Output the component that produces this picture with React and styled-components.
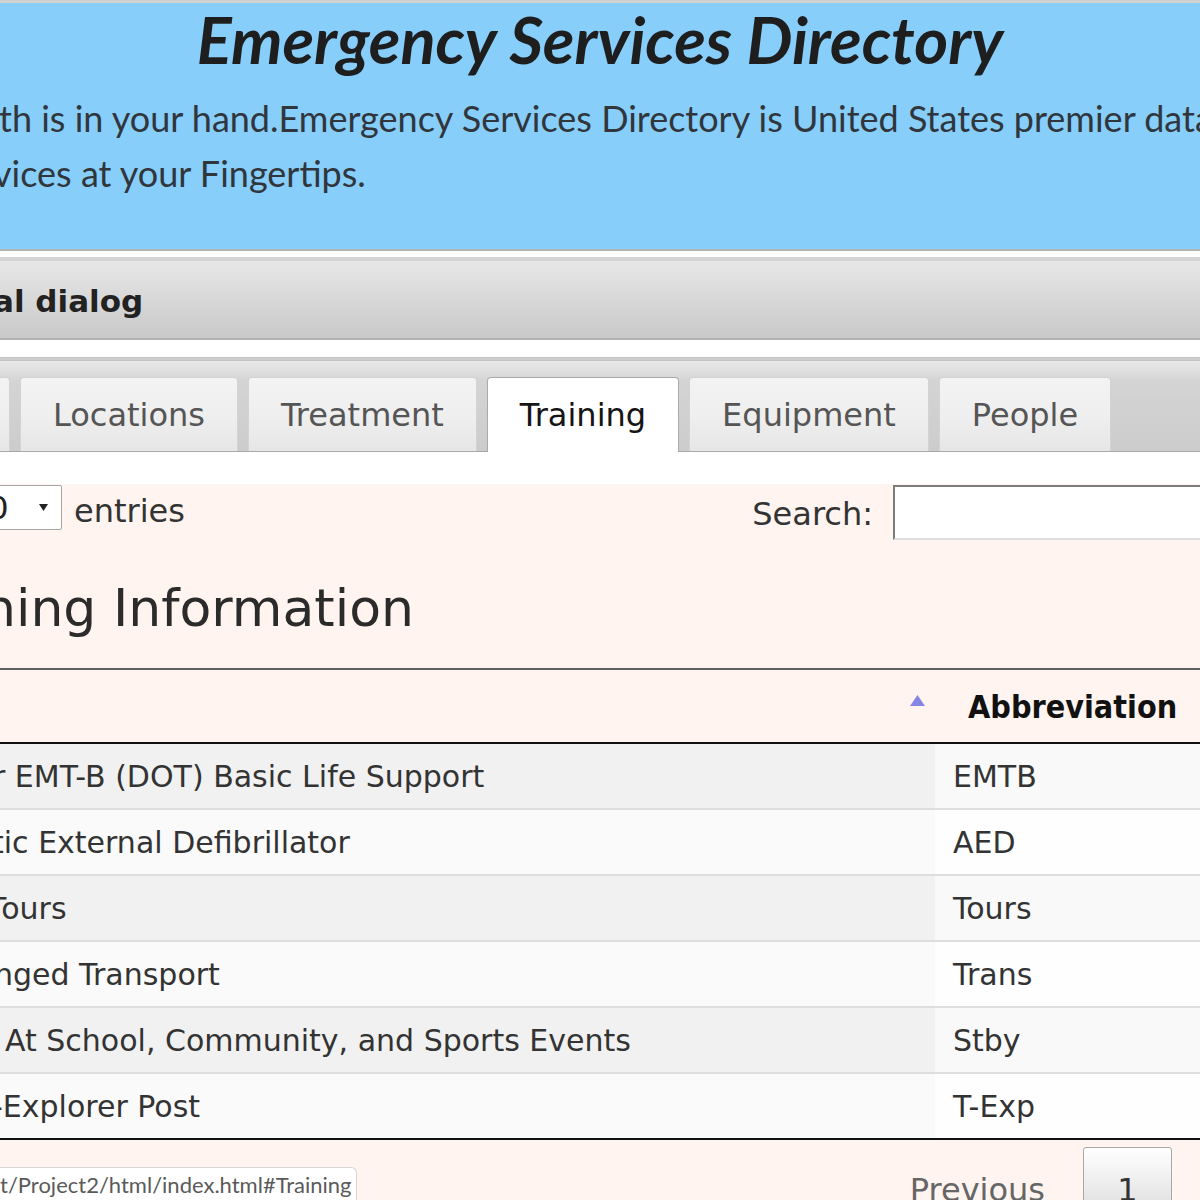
import styled, { createGlobalStyle } from "styled-components";

const GlobalStyle = createGlobalStyle`
	html, body {
		margin: 0;
		padding: 0;
		background: #ffffff;
		overflow: hidden;
	}
	body {
		font-family: "DejaVu Sans", Verdana, sans-serif;
		color: #333333;
	}
`;

const Page = styled.div`
	width: 1200px;
	height: 1200px;
	overflow: hidden;
	background: #ffffff;
`;

const Header = styled.header`
	height: 246px;
	background: #87cefa;
	border-top: 3px solid #d2d2d2;
	border-bottom: 2px solid #b4b4b4;
	overflow: hidden;
`;

const Title = styled.h1`
	margin: 0;
	text-align: center;
	font-family: Lato, "Open Sans", sans-serif;
	font-style: italic;
	font-weight: 700;
	font-size: 65px;
	line-height: 72px;
	color: #1e1e1e;
`;

const Lead = styled.div`
	margin-top: 16px;
	font-family: Lato, "Open Sans", sans-serif;
	font-size: 36px;
	line-height: 55px;
	color: #30363c;
	white-space: nowrap;
`;

const LeadLine = styled.div`
	margin-left: ${(p) => p.$cut}px;
`;

const DialogBar = styled.div`
	margin-top: 6px;
	height: 77px;
	border-top: 4px solid #d4d4d4;
	border-bottom: 2px solid #b3b3b3;
	background: linear-gradient(#e7e7e7, #c9c9c9);
	display: flex;
	align-items: center;
	overflow: hidden;
	white-space: nowrap;
	font-weight: bold;
	font-size: 31px;
	color: #222222;
`;

const DialogTitle = styled.span`
	margin-left: -7px;
	margin-top: 3px;
`;

const TabBar = styled.nav`
	margin-top: 17px;
	height: 74px;
	padding-top: 16px;
	border-top: 4px double #c4c4c4;
	border-bottom: 1px solid #a9a9a9;
	background: linear-gradient(#e9e9e9 0%, #d4d4d4 22%, #cccccc 100%);
	display: flex;
	align-items: flex-start;
	gap: 10px;
`;

const Tab = styled.div`
	position: relative;
	height: ${(p) => (p.$active ? 75 : 74)}px;
	box-sizing: border-box;
	padding: 0 32px;
	display: flex;
	align-items: center;
	border: 1px solid ${(p) => (p.$active ? "#aaaaaa" : "#d3d3d3")};
	border-bottom: none;
	border-radius: 4px 4px 0 0;
	background: ${(p) =>
		p.$active
			? "#ffffff"
			: "linear-gradient(#f3f3f3 0%, #efefef 50%, #e6e6e6 100%)"};
	color: ${(p) => (p.$active ? "#151515" : "#555555")};
	font-size: 32px;
	white-space: nowrap;
	${(p) => p.$ghost && "width: 40px; margin-left: -30px; padding: 0;"}
`;

const Spacer = styled.div`
	height: ${(p) => p.$h}px;
`;

const Content = styled.section`
	background: #fff4ef;
	height: 716px;
`;

const Controls = styled.div`
	height: 56px;
	display: flex;
	align-items: flex-start;
	font-size: 32px;
	color: #333333;
`;

const LengthBox = styled.div`
	margin-left: -41px;
	margin-top: 1px;
	width: 103px;
	height: 45px;
	box-sizing: border-box;
	border: 1px solid #a6a6a6;
	border-radius: 2px;
	background: #ffffff;
	display: flex;
	align-items: center;
	justify-content: space-between;
	padding: 0 13px 0 8px;
	font-size: 32px;
	color: #222222;
`;

const Caret = styled.svg`
	width: 9px;
	height: 7px;
`;

const Entries = styled.span`
	margin-left: 12px;
	margin-top: 5px;
	line-height: 45px;
`;

const SearchGroup = styled.label`
	margin-left: auto;
	margin-right: -110px;
	display: flex;
	align-items: flex-start;
	gap: 20px;
`;

const SearchText = styled.span`
	margin-top: 3px;
	line-height: 55px;
`;

const SearchInput = styled.div`
	margin-top: 1px;
	width: 417px;
	height: 55px;
	box-sizing: border-box;
	background: #ffffff;
	border: 2px solid;
	border-color: #7c7c7c #dedede #dedede #7c7c7c;
`;

const Heading = styled.h2`
	margin: 38px 0 30px -17px;
	font-weight: normal;
	font-size: 52px;
	line-height: 60px;
	color: #2b2b2b;
	white-space: nowrap;
`;

const Grid = styled.div`
	border-bottom: 2px solid #111111;
`;

const HeadRow = styled.div`
	display: grid;
	grid-template-columns: 935px 1fr;
	height: 72px;
	border-top: 2px solid #5e5e5e;
	border-bottom: 2px solid #111111;
`;

const SortCell = styled.div`
	display: flex;
	justify-content: flex-end;
	align-items: flex-start;
	padding: 25px 10px 0 0;
`;

const HeadCell = styled.div`
	display: flex;
	align-items: center;
	padding-left: 33px;
	padding-top: 2px;
	font-family: "DejaVu Sans Condensed", "DejaVu Sans", sans-serif;
	font-weight: bold;
	font-size: 32px;
	color: #111111;
	white-space: nowrap;
`;

const Row = styled.div`
	display: grid;
	grid-template-columns: 935px 1fr;
	height: 64px;
	& + & {
		border-top: 2px solid #dedede;
	}
`;

const Cell = styled.div`
	display: flex;
	align-items: center;
	overflow: hidden;
	white-space: nowrap;
	font-size: 30px;
	color: #333333;
	background: ${(p) => p.$bg};
	padding-left: ${(p) => p.$pad}px;
`;

const CellText = styled.span`
	margin-left: ${(p) => p.$cut}px;
`;

const Pager = styled.div`
	display: flex;
	justify-content: flex-end;
	align-items: flex-start;
	gap: 38px;
	padding: 7px 28px 0 0;
	font-size: 32px;
`;

const PagerText = styled.span`
	margin-top: 25px;
	line-height: 36px;
	color: #666666;
`;

const PageButton = styled.div`
	width: 89px;
	height: 70px;
	box-sizing: border-box;
	padding-top: 24px;
	text-align: center;
	line-height: 36px;
	border: 1px solid #a8a8a8;
	border-radius: 3px;
	background: linear-gradient(#ffffff 0%, #dcdcdc 100%);
	color: #333333;
`;

const StatusTip = styled.div`
	position: fixed;
	left: 0;
	bottom: 0;
	height: 32px;
	padding: 0 4px 0 0;
	background: #ffffff;
	border: 1px solid #d6d6d6;
	border-left: none;
	border-bottom: none;
	border-radius: 0 6px 0 0;
	font-family: Lato, "Open Sans", sans-serif;
	font-size: 22px;
	line-height: 34px;
	color: #5a5a5a;
	white-space: nowrap;
	overflow: hidden;
`;

const tabs = [
	{ label: "", ghost: true },
	{ label: "Locations" },
	{ label: "Treatment" },
	{ label: "Training", active: true },
	{ label: "Equipment" },
	{ label: "People" },
];

const rows = [
	{ name: "r EMT-B (DOT) Basic Life Support", abbr: "EMTB", cut: -7 },
	{ name: "tic External Defibrillator", abbr: "AED", cut: -8 },
	{ name: "Tours", abbr: "Tours", cut: -12 },
	{ name: "nged Transport", abbr: "Trans", cut: -6 },
	{ name: "At School, Community, and Sports Events", abbr: "Stby", cut: 5 },
	{ name: "-Explorer Post", abbr: "T-Exp", cut: -8 },
];

const App = () => {
	return (
		<Page>
			<GlobalStyle />
			<Header>
				<Title>Emergency Services Directory</Title>
				<Lead>
					<LeadLine $cut={-1}>
						th is in your hand.Emergency Services Directory is United
						States premier database of
					</LeadLine>
					<LeadLine $cut={-7}>vices at your Fingertips.</LeadLine>
				</Lead>
			</Header>
			<DialogBar>
				<DialogTitle>al dialog</DialogTitle>
			</DialogBar>
			<TabBar>
				{tabs.map((tab, i) => (
					<Tab key={i} $active={tab.active} $ghost={tab.ghost}>
						{tab.label}
					</Tab>
				))}
			</TabBar>
			<Spacer $h={32} />
			<Content>
				<Controls>
					<LengthBox>
						10
						<Caret viewBox="0 0 9 7">
							<path d="M0 0 L9 0 L4.5 7 Z" fill="#222" />
						</Caret>
					</LengthBox>
					<Entries>entries</Entries>
					<SearchGroup>
						<SearchText>Search:</SearchText>
						<SearchInput />
					</SearchGroup>
				</Controls>
				<Heading>ning Information</Heading>
				<Grid>
					<HeadRow>
						<SortCell>
							<svg width="15" height="11" viewBox="0 0 15 11">
								<path d="M7.5 0 L15 11 L0 11 Z" fill="#8585e3" />
							</svg>
						</SortCell>
						<HeadCell>Abbreviation</HeadCell>
					</HeadRow>
					{rows.map((row, i) => (
						<Row key={row.abbr}>
							<Cell $bg={i % 2 === 0 ? "#f1f1f1" : "#fafafa"} $pad={0}>
								<CellText $cut={row.cut}>{row.name}</CellText>
							</Cell>
							<Cell $bg={i % 2 === 0 ? "#f9f9f9" : "#fefefe"} $pad={18}>
								{row.abbr}
							</Cell>
						</Row>
					))}
				</Grid>
				<Pager>
					<PagerText>Previous</PagerText>
					<PageButton>1</PageButton>
				</Pager>
			</Content>
			<StatusTip>t/Project2/html/index.html#Training</StatusTip>
		</Page>
	);
};

export default App;
